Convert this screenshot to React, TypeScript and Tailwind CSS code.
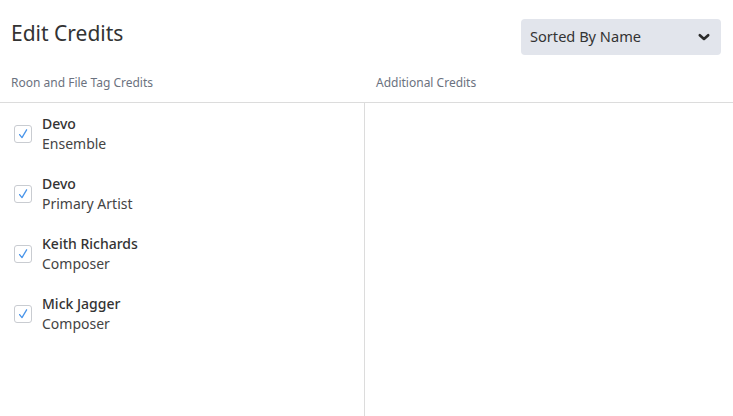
const credits = [
  { name: "Devo", role: "Ensemble" },
  { name: "Devo", role: "Primary Artist" },
  { name: "Keith Richards", role: "Composer" },
  { name: "Mick Jagger", role: "Composer" },
];

const CheckBox = () => (
  <div className="w-[18px] h-[18px] rounded-[3px] border border-[#c9ccd1] bg-white flex items-center justify-center shrink-0">
    <svg width="12" height="12" viewBox="0 0 12 12">
      <path d="M2.6 6.6 L5 9.6 L9.6 1.8" fill="none" stroke="#4a95ea" strokeWidth="1.3" strokeLinecap="round" strokeLinejoin="round" />
    </svg>
  </div>
);

export default function App() {
  return (
    <div className="w-[733px] h-[416px] bg-white overflow-hidden text-[#333] font-['Noto_Sans',sans-serif]">
      {/* Header */}
      <div className="flex justify-between items-start pl-[11px] pr-[12px] pt-[19px] h-[64px]">
        <div className="text-[21px] leading-[28px] text-[#333]">Edit Credits</div>
        <div className="w-[200px] h-[36px] rounded-[4px] bg-[#e2e5ec] flex items-center justify-between pl-[9px] pr-[10px]">
          <span className="text-[14.6px] leading-[20px] text-[#333] -mt-[2px]">Sorted By Name</span>
          <svg width="14" height="14" viewBox="0 0 14 14">
            <path d="M2.8 5.2 L7 9 L11.2 5.2" fill="none" stroke="#2b2b2b" strokeWidth="2.6" strokeLinecap="round" strokeLinejoin="round" />
          </svg>
        </div>
      </div>

      {/* Column headers */}
      <div className="flex h-[39px] border-b border-[#dcdcdc] text-[12px] leading-[16px] text-[#6b7280]">
        <div className="w-[365px] pl-[11px] pt-[11px]">Roon and File Tag Credits</div>
        <div className="flex-1 pl-[11px] pt-[11px]">Additional Credits</div>
      </div>

      {/* Columns */}
      <div className="flex h-[313px]">
        <div className="w-[365px] border-r border-[#dcdcdc] pt-[11px] flex flex-col gap-[20px]">
          {credits.map((c, i) => (
            <div key={i} className="flex items-center pl-[14px] gap-[10px]">
              <CheckBox />
              <div>
                <div className="text-[14px] leading-[20px] font-medium text-[#333]">{c.name}</div>
                <div className="text-[14px] leading-[20px] text-[#444]">{c.role}</div>
              </div>
            </div>
          ))}
        </div>
        <div className="flex-1" />
      </div>
    </div>
  );
}
